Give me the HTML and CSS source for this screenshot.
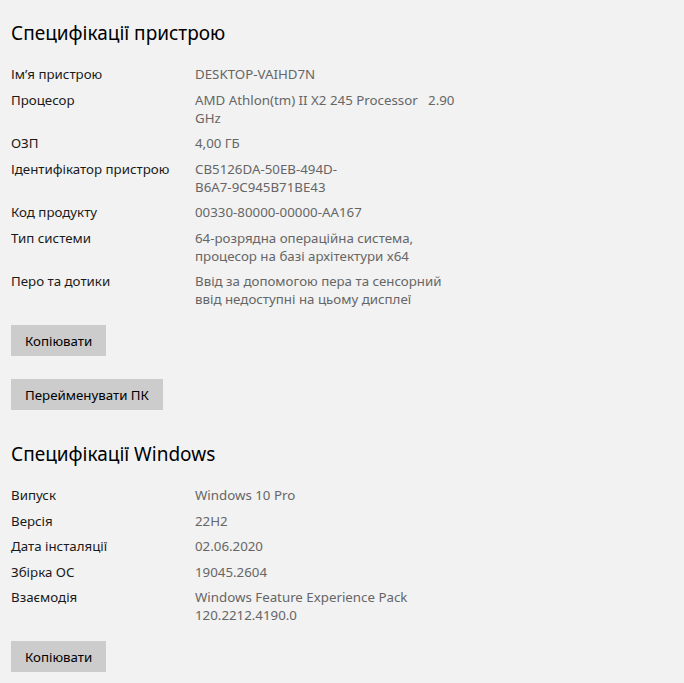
FILE: index.html
```html
<!DOCTYPE html>
<html lang="uk">

<head>
  <meta charset="UTF-8">
  <meta name="viewport" content="width=device-width, initial-scale=1">
  <title>Про систему</title>
  <link rel="stylesheet" href="styles.css">
</head>

<body>
  <div class="page">
    <h2 class="title">Специфікації пристрою</h2>
    <div class="specs">
      <div class="label">Ім’я пристрою</div>
      <div class="value">DESKTOP-VAIHD7N</div>
      <div class="label">Процесор</div>
      <div class="value">AMD Athlon(tm) II X2 245 Processor&nbsp;&nbsp; 2.90 GHz</div>
      <div class="label">ОЗП</div>
      <div class="value">4,00 ГБ</div>
      <div class="label">Ідентифікатор пристрою</div>
      <div class="value">CB5126DA-50EB-494D-<br>B6A7-9C945B71BE43</div>
      <div class="label">Код продукту</div>
      <div class="value">00330-80000-00000-AA167</div>
      <div class="label">Тип системи</div>
      <div class="value">64-розрядна операційна система, процесор на базі архітектури x64</div>
      <div class="label">Перо та дотики</div>
      <div class="value">Ввід за допомогою пера та сенсорний ввід недоступні на цьому дисплеї</div>
    </div>
    <button class="btn btn-first">Копіювати</button>
    <button class="btn btn-rename">Перейменувати ПК</button>

    <h2 class="title title-win">Специфікації Windows</h2>
    <div class="specs">
      <div class="label">Випуск</div>
      <div class="value">Windows 10 Pro</div>
      <div class="label">Версія</div>
      <div class="value">22H2</div>
      <div class="label">Дата інсталяції</div>
      <div class="value">02.06.2020</div>
      <div class="label">Збірка ОС</div>
      <div class="value">19045.2604</div>
      <div class="label">Взаємодія</div>
      <div class="value">Windows Feature Experience Pack 120.2212.4190.0</div>
    </div>
    <button class="btn btn-first">Копіювати</button>
  </div>
</body>

</html>
```

FILE: styles.css
```css
body {
  margin: 0px;
  background-color: #F2F2F2;
  font-family: "Noto Sans", "Open Sans", sans-serif;
  color: #1A1A1A;
}

.page {
  padding: 19px 11px 0 11px;
  display: flex;
  flex-direction: column;
  align-items: flex-start;
}

.title {
  margin: 0;
  font-size: 19px;
  font-weight: 400;
  line-height: 28px;
  color: #000000;
}

.title-win {
  margin-top: 30px;
}

.specs {
  margin-top: 18px;
  display: grid;
  grid-template-columns: 184px 266px;
  row-gap: 7.5px;
  font-size: 13.3px;
  line-height: 18px;
}

.value {
  color: #666666;
}

.btn {
  border: none;
  border-radius: 0;
  background-color: #CCCCCC;
  color: #000000;
  font-family: inherit;
  font-size: 13.3px;
  height: 31px;
  padding: 0 14px;
}

.btn-first {
  margin-top: 17px;
}

.btn-rename {
  margin-top: 23px;
}
```
